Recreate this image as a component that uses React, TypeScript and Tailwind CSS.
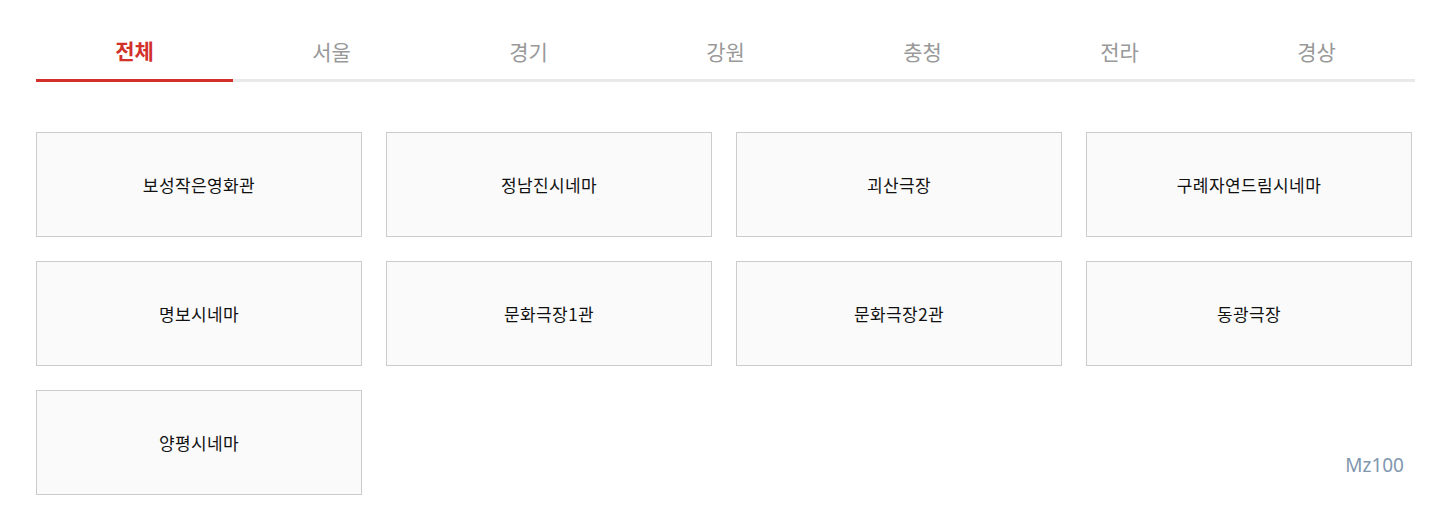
const tabs = ["전체", "서울", "경기", "강원", "충청", "전라", "경상"];

const theaters = [
  "보성작은영화관",
  "정남진시네마",
  "괴산극장",
  "구례자연드림시네마",
  "명보시네마",
  "문화극장1관",
  "문화극장2관",
  "동광극장",
  "양평시네마",
];

const font = { fontFamily: '"Noto Sans CJK KR", "Noto Sans", sans-serif' };

export default function App() {
  return (
    <div className="relative min-h-[522px] bg-white" style={font}>
      <div className="pl-[36px] pt-[28px]">
        {/* Region tabs */}
        <ul className="flex w-[1379px] border-b-[3px] border-[#e9e9ec]">
          {tabs.map((t, i) => (
            <li
              key={t}
              className={
                i === 0
                  ? "-mb-[3px] flex h-[54px] flex-1 items-center justify-center border-b-[3px] border-[#d2302a] pb-[6px] text-[21px] font-bold text-[#d2302a]"
                  : "flex h-[51px] flex-1 items-center justify-center pb-[3px] text-[21px] text-[#999999]"
              }
            >
              {t}
            </li>
          ))}
        </ul>

        {/* Theater list */}
        <div className="mt-[50px] grid w-[1376px] grid-cols-4 gap-[24px]">
          {theaters.map((name) => (
            <div
              key={name}
              className="flex h-[105px] items-center justify-center border border-[#cccccc] bg-[#fafafa] text-[17px] tracking-[0.4px] text-[#111111]"
            >
              {name}
            </div>
          ))}
        </div>
      </div>

      <span
        className="absolute right-[41px] top-[451px] text-[19px] text-[#7f97ae]"
        style={{ fontFamily: '"Noto Sans", sans-serif' }}
      >
        Mz100
      </span>
    </div>
  );
}
